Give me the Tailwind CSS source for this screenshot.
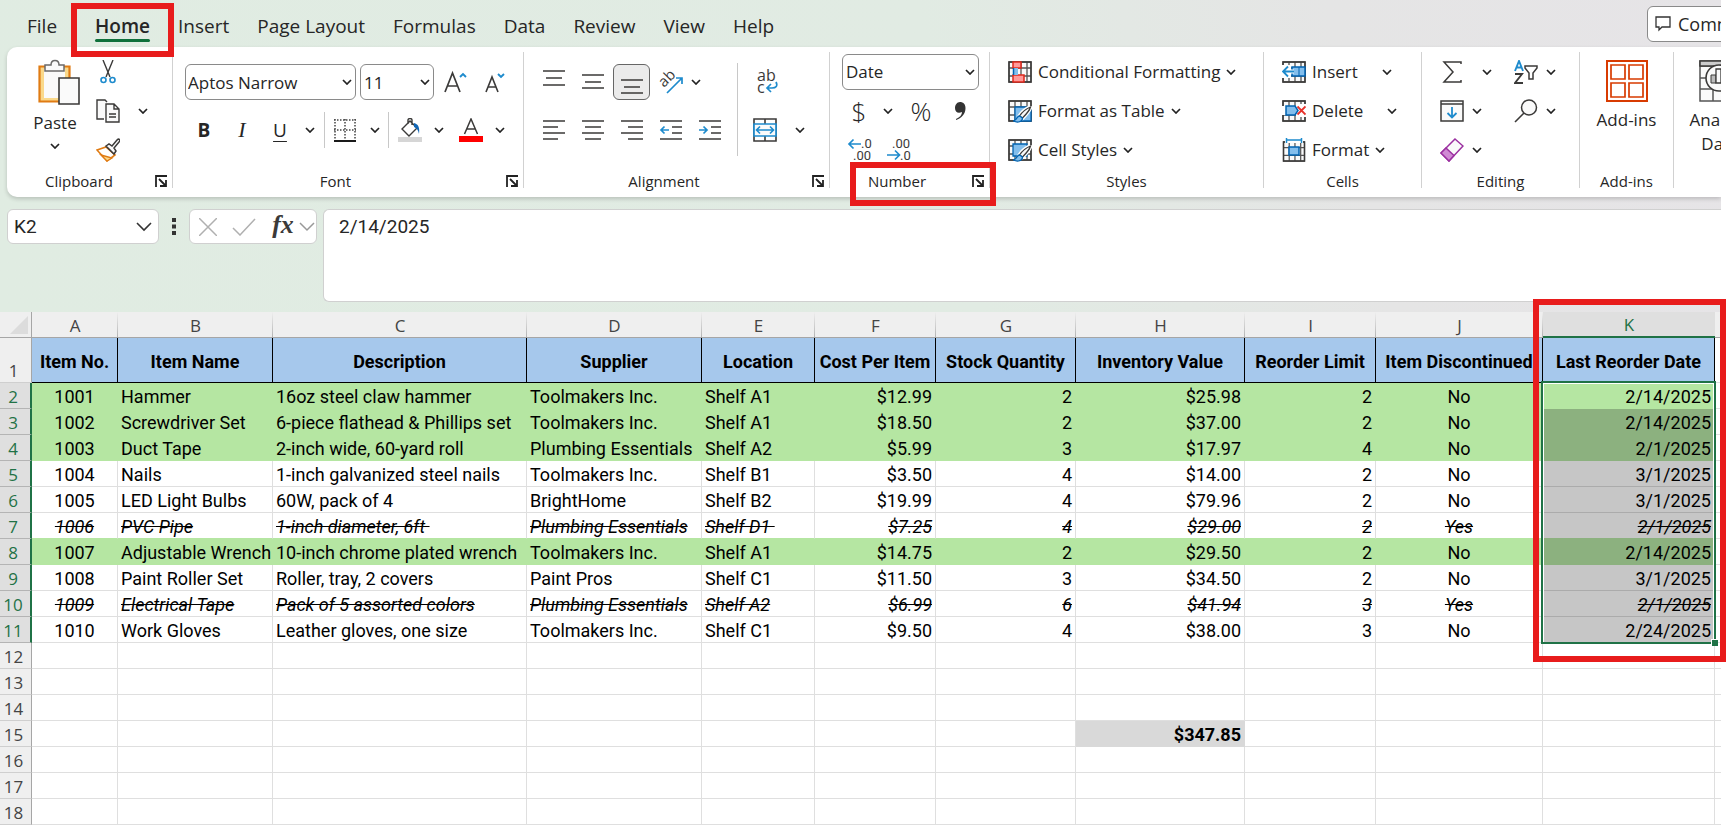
<!DOCTYPE html>
<html lang="en">
<head>
    <meta charset="UTF-8">
    <meta name="viewport" content="width=device-width, initial-scale=1.0">
    <title>Inventory - Excel</title>
    <script src="https://cdn.jsdelivr.net/npm/@tailwindcss/browser@4"></script>
</head>
<body class="bg-white pr-[6px] overflow-x-hidden font-['Open_Sans','Noto_Sans',sans-serif] text-[#262626]">
    <!-- Shared icons -->
    <svg class="hidden">
        <symbol id="chevron" viewBox="0 0 10 6"><path d="M1 1l4 4 4-4" fill="none" stroke="#222" stroke-width="1.7"/></symbol>
        <symbol id="launcher" viewBox="0 0 12 12"><path d="M1 12V1h11M4 4l6 6M11 5v6H5" fill="none" stroke="#222" stroke-width="1.8"/></symbol>
        <symbol id="grid" viewBox="0 0 24 22"><path d="M1 1h22v20H1zM1 7h22M1 15h22M7 1v20M13 1v20M19 1v20" fill="#fafafa" stroke="#555" stroke-width="1.3"/><path d="M1 1h22v20H1z" fill="none" stroke="#3b3a39" stroke-width="1.5"/></symbol>
        <symbol id="brush" viewBox="0 0 18 17"><path d="M17 1C12 3 8 7 6 10l3 2c3-3 7-7 8-11z" fill="#fff" stroke="#fff" stroke-width="4"/><path d="M17 1C12 3 8 7 6 10l3 2c3-3 7-7 8-11z" fill="#fafafa" stroke="#3b3a39" stroke-width="1.3"/><path d="M6 10c-3 0-2 4-6 5 4 2 9 1 9-3z" fill="#83beec" stroke="#0063b1" stroke-width="1.3"/></symbol>
    </svg>

    <div class="overflow-x-clip">
        <div class="bg-[linear-gradient(78deg,#e0ece2_0%,#e1ebe3_55%,#e5e5e5_78%,#e6e4e7_100%)] pb-[10px]">
            <!-- Tabs -->
            <div class="flex h-[47px] items-center">
                <nav class="flex gap-7 pl-[27px] pt-1 text-[19px] leading-6">
                    <button>File</button>
                    <button class="relative ml-[10px] font-semibold">Home
                        <span class="absolute inset-x-0 -bottom-1 h-[3px] rounded-full bg-[#0f703b]"></span>
                        <span class="pointer-events-none absolute -inset-x-6 -top-[11px] z-10 h-[54px] border-6 border-[#e81c1c]"></span>
                    </button>
                    <button>Insert</button>
                    <button>Page Layout</button>
                    <button>Formulas</button>
                    <button>Data</button>
                    <button>Review</button>
                    <button>View</button>
                    <button>Help</button>
                </nav>
                <div class="ml-auto w-[74px]">
                    <button class="flex h-9 w-[130px] items-center gap-[7px] rounded-md border border-[#8a8a8a] bg-white pl-[7px] text-[18px]">
                        <svg class="h-4 w-4" viewBox="0 0 16 16"><path d="M1 1h14v10H7l-3 3v-3H1z" fill="none" stroke="#333" stroke-width="1.3"/></svg>
                        <span class="pt-0.5">Comments</span>
                    </button>
                </div>
            </div>

            <!-- Ribbon -->
            <div class="ml-[7px] flex h-[150px] rounded-l-[10px] bg-white pt-[5px] shadow-[0_2px_4px_rgba(0,0,0,0.18)] text-[17px] leading-6">
                <section class="flex h-[136px] w-[166px] shrink-0 flex-col border-r border-[#d1d1d1]">
                    <div class="flex h-[117px]">
                        <button class="flex w-[88px] flex-col items-center pl-2 pt-[7px]">
                            <svg class="ml-2 h-[46px] w-[42px]" viewBox="0 0 42 46">
                                <path d="M1.500 7.500h30v35h-30z" fill="#fad98b" stroke="#e07b13" stroke-width="2.200"/><path d="M6 10h21v29H6z" fill="#fafafa"/>
                                <path d="M7 12V6h6c0-6 8-6 8 0h5v6z" fill="#fafafa" stroke="#6b6a69" stroke-width="1.500"/>
                                <path d="M21 19h20v26H21z" fill="#fafafa" stroke="#3b3a39" stroke-width="1.600"/>
                            </svg>
                            <span class="mt-1.5">Paste</span>
                            <svg class="mt-2 h-1.5 w-2.5"><use href="#chevron"/></svg>
                        </button>
                        <div class="grid w-[26px] grid-rows-3 justify-items-center">
                            <button aria-label="Cut"><svg class="h-6 w-4" viewBox="0 0 16 24"><path d="M3 0l7 17M13 0L6 17" fill="none" stroke="#3b3a39" stroke-width="1.400"/><circle cx="3.500" cy="20" r="2.500" fill="none" stroke="#1e8bcd" stroke-width="1.600"/><circle cx="12.500" cy="20" r="2.500" fill="none" stroke="#1e8bcd" stroke-width="1.600"/></svg></button>
                            <button aria-label="Copy"><svg class="h-6 w-6" viewBox="0 0 24 24"><path d="M8 20H1V1h8l2 2" fill="#fafafa" stroke="#3b3a39" stroke-width="1.400"/><path d="M10 5h8l5 5v13H10zM18 5v5h5M13 15h7M13 18h7" fill="#fafafa" stroke="#3b3a39" stroke-width="1.400"/></svg></button>
                            <button aria-label="Format Painter"><svg class="h-6 w-6" viewBox="0 0 24 24"><path d="M1 12l9-3 9 8-8 6z" fill="#fff" stroke="#e07b13" stroke-width="1.600"/><path d="M5 17l11 3-5 3z" fill="#fad98b" stroke="#e07b13" stroke-width="1.300"/><path d="M10 8l3-2 3 2 5-6c2-2 4 0 2 2l-5 6 2 3-2 3z" fill="#fafafa" stroke="#3b3a39" stroke-width="1.500"/></svg></button>
                        </div>
                        <button class="ml-3 flex w-5 items-center justify-center" aria-label="Copy options"><svg class="h-1.5 w-2.5"><use href="#chevron"/></svg></button>
                    </div>
                    <div class="mt-auto flex h-[14px] items-center pr-[5px] text-[15px] leading-[14px]"><span class="flex-1 text-center">Clipboard</span><button class="ml-1" aria-label="Clipboard settings"><svg class="h-3 w-3"><use href="#launcher"/></svg></button></div>
                </section>

                <section class="flex h-[136px] w-[351px] shrink-0 flex-col border-r border-[#d1d1d1]">
                    <div class="flex h-[117px] flex-col gap-3 pl-3 pt-3">
                        <div class="flex h-9 items-center">
                            <div class="flex h-9 w-[171px] items-center rounded-md border border-[#8a8a8a] pl-[2px] pr-[3px]">
                                <select aria-label="Font" class="min-w-0 flex-1 appearance-none pt-0.5 outline-none"><option>Aptos Narrow</option></select>
                                <svg class="h-1.5 w-2.5"><use href="#chevron"/></svg>
                            </div>
                            <div class="ml-1 flex h-9 w-[74px] items-center rounded-md border border-[#8a8a8a] pl-[3px] pr-[3px]">
                                <select aria-label="Font size" class="min-w-0 flex-1 appearance-none pt-0.5 outline-none"><option>11</option></select>
                                <svg class="h-1.5 w-2.5"><use href="#chevron"/></svg>
                            </div>
                            <button class="ml-2.5 w-6" aria-label="Increase font size"><svg class="h-6 w-6" viewBox="0 0 24 24"><path d="M1 22L8.500 3 16 22M3.500 16h10" fill="none" stroke="#3b3a39" stroke-width="1.700"/><path d="M16 7l3-3 3 3" fill="none" stroke="#1e8bcd" stroke-width="1.900"/></svg></button>
                            <button class="ml-4 w-6" aria-label="Decrease font size"><svg class="h-6 w-6" viewBox="0 0 24 24"><path d="M2 22L8 7l6 15M4 17h8" fill="none" stroke="#3b3a39" stroke-width="1.600"/><path d="M14 4l3 3 3-3" fill="none" stroke="#1e8bcd" stroke-width="1.900"/></svg></button>
                        </div>
                        <div class="flex h-9 items-center">
                            <button class="w-[38px] text-[19px] font-bold">B</button>
                            <button class="w-[38px] font-['Liberation_Serif',serif] text-[22px] italic">I</button>
                            <button class="w-[38px] text-[19px] underline underline-offset-4">U</button>
                            <button class="flex w-[22px] justify-center" aria-label="Underline options"><svg class="h-1.5 w-2.5"><use href="#chevron"/></svg></button>
                            <span class="ml-[3px] h-9 w-px bg-[#c8c8c8]"></span>
                            <button class="flex w-10 justify-center" aria-label="Borders"><svg class="h-6 w-6" viewBox="0 0 24 24"><path d="M1 2h22M1 12h22M2 1v20M12 1v20M22 1v20" fill="none" stroke="#444" stroke-width="1.500" stroke-dasharray="1.500 1.500"/><path d="M1 23h22" stroke="#000" stroke-width="1.800"/></svg></button>
                            <button class="flex w-5 justify-center" aria-label="Border options"><svg class="h-1.5 w-2.5"><use href="#chevron"/></svg></button>
                            <span class="ml-[3px] h-9 w-px bg-[#c8c8c8]"></span>
                            <button class="flex w-[42px] justify-center" aria-label="Fill colour"><svg class="h-6 w-6" viewBox="0 0 24 24"><path d="M4 11l8-8 7 7-8 8zM10 6V2c0-2 4-2 4 0v5" fill="none" stroke="#3b3a39" stroke-width="1.400"/><path d="M16 5c4 1 6 4 5 11-1-4-2-6-5-7z" fill="#1166b5"/><path d="M0 19h24v5H0z" fill="#d6d6d6"/></svg></button>
                            <button class="flex w-4 justify-center" aria-label="Fill options"><svg class="h-1.5 w-2.5"><use href="#chevron"/></svg></button>
                            <button class="flex w-12 justify-center" aria-label="Font colour"><svg class="h-6 w-6" viewBox="0 0 24 24"><path d="M5.500 16L12 1l6.500 15M8 11h8" fill="none" stroke="#3b3a39" stroke-width="1.500"/><path d="M0 18h24v6H0z" fill="#f00"/></svg></button>
                            <button aria-label="Font colour options"><svg class="h-1.5 w-2.5"><use href="#chevron"/></svg></button>
                        </div>
                    </div>
                    <div class="mt-auto flex h-[14px] items-center pr-[5px] text-[15px] leading-[14px]"><span class="flex-1 text-center">Font</span><button class="ml-2" aria-label="Font settings"><svg class="h-3 w-3"><use href="#launcher"/></svg></button></div>
                </section>

                <section class="flex h-[136px] w-[306px] shrink-0 flex-col border-r border-[#d1d1d1]">
                    <div class="flex h-[117px] pl-[10px]">
                        <div class="grid grid-cols-[repeat(5,39px)] grid-rows-[36px_36px] gap-y-3 pt-3 *:flex *:items-center *:justify-center">
                            <button aria-label="Top align"><svg class="h-6 w-6" viewBox="0 0 24 24"><path d="M1 1h22M4 8h16M1 15h22" fill="none" stroke="#3b3a39" stroke-width="1.600"/></svg></button>
                            <button aria-label="Middle align"><svg class="h-6 w-6" viewBox="0 0 24 24"><path d="M1 5h22M4 12h16M1 18h22" fill="none" stroke="#3b3a39" stroke-width="1.600"/></svg></button>
                            <button class="mx-[1px] rounded-md border border-[#666] bg-[#ebebeb]" aria-label="Bottom align"><svg class="h-6 w-6" viewBox="0 0 24 24"><path d="M1 10h22M4 17h16M1 23h22" fill="none" stroke="#3b3a39" stroke-width="1.600"/></svg></button>
                            <button aria-label="Orientation"><svg class="h-6 w-6 overflow-visible" viewBox="0 0 24 24"><text x="5" y="18" transform="rotate(-45 5 18)" font-size="15" font-family="Open Sans, sans-serif" fill="#3b3a39">ab</text><path d="M8 23L23 8M17 8h6v6" fill="none" stroke="#1e8bcd" stroke-width="1.700"/></svg></button>
                            <button class="w-3" aria-label="Orientation options"><svg class="h-1.5 w-2.5"><use href="#chevron"/></svg></button>
                            <button aria-label="Align left"><svg class="h-6 w-6" viewBox="0 0 24 24"><path d="M1 3h22M1 9h15M1 15h22M1 21h15" fill="none" stroke="#3b3a39" stroke-width="1.600"/></svg></button>
                            <button aria-label="Center"><svg class="h-6 w-6" viewBox="0 0 24 24"><path d="M1 3h22M4 9h16M1 15h22M4 21h16" fill="none" stroke="#3b3a39" stroke-width="1.600"/></svg></button>
                            <button aria-label="Align right"><svg class="h-6 w-6" viewBox="0 0 24 24"><path d="M1 3h22M8 9h15M1 15h22M8 21h15" fill="none" stroke="#3b3a39" stroke-width="1.600"/></svg></button>
                            <button aria-label="Decrease indent"><svg class="h-6 w-6" viewBox="0 0 24 24"><path d="M1 3h22M13 9h10M13 15h10M1 21h22" fill="none" stroke="#3b3a39" stroke-width="1.600"/><path d="M10 12H2M5.500 8.500L2 12l3.500 3.500" fill="none" stroke="#1e8bcd" stroke-width="1.700"/></svg></button>
                            <button aria-label="Increase indent"><svg class="h-6 w-6" viewBox="0 0 24 24"><path d="M1 3h22M13 9h10M13 15h10M1 21h22" fill="none" stroke="#3b3a39" stroke-width="1.600"/><path d="M1 12h8M5.500 8.500L9 12l-3.500 3.500" fill="none" stroke="#1e8bcd" stroke-width="1.700"/></svg></button>
                        </div>
                        <span class="ml-2 mt-[11px] h-[93px] w-px bg-[#c8c8c8]"></span>
                        <div class="grid grid-cols-[54px_16px] grid-rows-[36px_36px] gap-y-3 pt-3 *:flex *:items-center *:justify-center">
                            <button class="pl-1" aria-label="Wrap text"><svg class="h-6 w-6 overflow-visible" viewBox="0 0 24 24"><text x="2" y="11" font-size="16" font-family="Open Sans, sans-serif" fill="#3b3a39">ab</text><text x="2" y="23" font-size="16" font-family="Open Sans, sans-serif" fill="#3b3a39">c</text><path d="M21 12c2 4 0 6-4 6h-5M16 14l-4 4 4 4" fill="none" stroke="#1e8bcd" stroke-width="1.700"/></svg></button>
                            <span></span>
                            <button aria-label="Merge and center"><svg class="h-6 w-6" viewBox="0 0 24 24"><path d="M1 1h22v22H1zM12 1v22" fill="none" stroke="#3b3a39" stroke-width="1.600"/><path d="M1 6h22v12H1z" fill="#fafafa" stroke="#1e8bcd" stroke-width="1.700"/><path d="M4 12h16M7 8.500L3.500 12 7 15.500M17 8.500l3.500 3.500-3.500 3.500" fill="none" stroke="#1e8bcd" stroke-width="1.600"/></svg></button>
                            <button aria-label="Merge options"><svg class="h-1.5 w-2.5"><use href="#chevron"/></svg></button>
                        </div>
                    </div>
                    <div class="mt-auto flex h-[14px] items-center pr-[5px] text-[15px] leading-[14px]"><span class="flex-1 text-center">Alignment</span><button class="ml-2" aria-label="Alignment settings"><svg class="h-3 w-3"><use href="#launcher"/></svg></button></div>
                </section>

                <section class="flex h-[136px] w-[160px] shrink-0 flex-col border-r border-[#d1d1d1]">
                    <div class="grid h-[117px] grid-rows-[39px_39px_39px] items-center pl-3">
                        <div class="flex h-9 w-[137px] items-center rounded-md border border-[#8a8a8a] pl-[3px] pr-[3px]">
                            <select aria-label="Number format" class="min-w-0 flex-1 appearance-none outline-none"><option>Date</option></select>
                            <svg class="h-1.5 w-2.5"><use href="#chevron"/></svg>
                        </div>
                        <div class="flex items-center text-[26px] leading-8">
                            <button class="w-[34px] font-light">$</button>
                            <button class="flex w-6 justify-center" aria-label="Currency options"><svg class="h-1.5 w-2.5"><use href="#chevron"/></svg></button>
                            <button class="w-[42px] font-light">%</button>
                            <button class="flex w-9 justify-center" aria-label="Comma style"><svg class="h-5 w-3" viewBox="0 0 12 20"><path d="M6 1c3 0 5.500 2 5.500 6 0 6-4 10-9.500 12v-1c4-2 6-4 6-7-4 2-7 0-7-4 0-3 2-6 5-6z" fill="#333"/></svg></button>
                        </div>
                        <div class="flex items-center">
                            <button class="flex w-9 justify-center" aria-label="Increase decimal"><svg class="h-6 w-6 overflow-visible" viewBox="0 0 24 24"><text x="13" y="10" font-size="13" font-family="Roboto, sans-serif" fill="#3b3a39">.0</text><text x="5" y="22" font-size="13" font-family="Roboto, sans-serif" fill="#3b3a39">.00</text><path d="M13 6H1M5.500 1.500L1 6l4.500 4.500" fill="none" stroke="#1e8bcd" stroke-width="1.700"/></svg></button>
                            <button class="flex w-[42px] justify-center" aria-label="Decrease decimal"><svg class="h-6 w-6 overflow-visible" viewBox="0 0 24 24"><text x="5" y="10" font-size="13" font-family="Roboto, sans-serif" fill="#3b3a39">.00</text><text x="13" y="22" font-size="13" font-family="Roboto, sans-serif" fill="#3b3a39">.0</text><path d="M0 17h12M8 12.500l4.500 4.500L8 21.500" fill="none" stroke="#1e8bcd" stroke-width="1.700"/></svg></button>
                        </div>
                    </div>
                    <div class="relative mt-auto flex h-[14px] items-center pr-[5px] text-[15px] leading-[14px]"><span class="flex-1 text-center">Number</span><button class="ml-2" aria-label="Number settings"><svg class="h-3 w-3"><use href="#launcher"/></svg></button>
                        <span class="pointer-events-none absolute -right-[7px] -top-3 left-5 z-10 h-11 border-6 border-[#e81c1c]"></span>
                    </div>
                </section>

                <section class="flex h-[136px] w-[274px] shrink-0 flex-col border-r border-[#d1d1d1]">
                    <div class="grid h-[117px] grid-rows-3 justify-items-start pl-[18px]">
                        <button class="flex items-center gap-1.5">
                            <svg class="h-6 w-6" viewBox="0 0 24 24"><use href="#grid" x="0" y="1" width="24" height="22"/><path d="M5 2h8v6H5zM5 15h11v7H5z" fill="#ff9a9a" stroke="#e0281c" stroke-width="1.500"/><path d="M5 8h5v7H5z" fill="#83beec"/><path d="M5.500 8v7" stroke="#0063b1" stroke-width="1.500"/></svg>
                            Conditional Formatting <svg class="h-1.5 w-2.5"><use href="#chevron"/></svg></button>
                        <button class="flex items-center gap-1.5">
                            <svg class="h-6 w-6" viewBox="0 0 24 24"><use href="#grid" x="0" y="1" width="24" height="22"/><path d="M7 8h16v14H7z" fill="#83beec" stroke="#0063b1" stroke-width="1.300"/><use href="#brush" x="5" y="7" width="19" height="17"/></svg>
                            Format as Table <svg class="h-1.5 w-2.5"><use href="#chevron"/></svg></button>
                        <button class="flex items-center gap-1.5">
                            <svg class="h-6 w-6" viewBox="0 0 24 24"><use href="#grid" x="0" y="1" width="24" height="22"/><path d="M5 6h14v12H5z" fill="#83beec" stroke="#0063b1" stroke-width="1.300"/><use href="#brush" x="5" y="7" width="19" height="17"/></svg>
                            Cell Styles <svg class="h-1.5 w-2.5"><use href="#chevron"/></svg></button>
                    </div>
                    <div class="mt-auto h-[14px] text-center text-[15px] leading-[14px]">Styles</div>
                </section>

                <section class="flex h-[136px] w-[158px] shrink-0 flex-col border-r border-[#d1d1d1]">
                    <div class="grid h-[117px] grid-rows-3 justify-items-start pl-[18px]">
                        <button class="flex items-center gap-1.5">
                            <svg class="h-6 w-6" viewBox="0 0 24 24"><use href="#grid" x="0" y="1" width="24" height="22"/><path d="M10 7h13v9H10z" fill="#83beec" stroke="#0063b1" stroke-width="1.500"/><path d="M17 7v9" stroke="#0063b1"/><path d="M0 5h9v13H0z" fill="#fff"/><path d="M12 11.500H1M6 6.500l-5 5 5 5" fill="none" stroke="#fff" stroke-width="4"/><path d="M12 11.500H1M6 6.500l-5 5 5 5" fill="none" stroke="#1e8bcd" stroke-width="1.800"/></svg>
                            Insert <svg class="ml-[18px] h-1.5 w-2.5"><use href="#chevron"/></svg></button>
                        <button class="flex items-center gap-1.5">
                            <svg class="h-6 w-6" viewBox="0 0 24 24"><use href="#grid" x="0" y="1" width="24" height="22"/><path d="M0 7h4v9H0zM14 5h10v13H14z" fill="#fff"/><path d="M4 7h9l3 4.500-3 4.500H4z" fill="#83beec" stroke="#0063b1" stroke-width="1.500"/><path d="M15.500 7.500l8 8M23.500 7.500l-8 8" stroke="#e8312a" stroke-width="1.800"/></svg>
                            Delete <svg class="ml-[18px] h-1.5 w-2.5"><use href="#chevron"/></svg></button>
                        <button class="flex items-center gap-1.5">
                            <svg class="h-6 w-6" viewBox="0 0 24 24"><use href="#grid" x="0" y="3" width="24" height="21"/><path d="M3 0h18v5H3z" fill="#fff"/><path d="M5 2h14M4.500 0v5M19.500 0v5" stroke="#1e8bcd" stroke-width="1.500"/><path d="M7 9h10v8H7z" fill="#83beec" stroke="#0063b1" stroke-width="1.500"/></svg>
                            Format <svg class="h-1.5 w-2.5"><use href="#chevron"/></svg></button>
                    </div>
                    <div class="mt-auto h-[14px] text-center text-[15px] leading-[14px]">Cells</div>
                </section>

                <section class="flex h-[136px] w-[158px] shrink-0 flex-col border-r border-[#d1d1d1]">
                    <div class="grid h-[117px] grid-cols-[74px_1fr] grid-rows-3 pl-3 *:flex *:items-center">
                        <button aria-label="AutoSum"><svg class="mx-1.5 h-6 w-6" viewBox="0 0 24 24"><path d="M21 4V2H4l9 10-9 10h17v-2" fill="none" stroke="#3b3a39" stroke-width="1.500"/></svg><svg class="ml-3 h-1.5 w-2.5"><use href="#chevron"/></svg></button>
                        <button aria-label="Sort and filter"><svg class="mx-1.5 h-6 w-6" viewBox="0 0 24 24"><path d="M1 11l4-10 4 10M2.500 7.500h5" fill="none" stroke="#1e8bcd" stroke-width="1.900"/><path d="M1 14h7l-7 9h8" fill="none" stroke="#3b3a39" stroke-width="1.900"/><path d="M11 6h12v2l-4 5v6h-4v-6l-4-5z" fill="none" stroke="#3b3a39" stroke-width="1.500"/></svg><svg class="ml-0.5 h-1.5 w-2.5"><use href="#chevron"/></svg></button>
                        <button aria-label="Fill"><svg class="mx-1.5 h-6 w-6" viewBox="0 0 24 24"><path d="M1 2h22v20H1zM1 5h22" fill="#fafafa" stroke="#3b3a39" stroke-width="1.500"/><path d="M12 8v10M7.500 14l4.500 4.500 4.500-4.500" fill="none" stroke="#1e8bcd" stroke-width="1.800"/></svg><svg class="ml-0.5 h-1.5 w-2.5"><use href="#chevron"/></svg></button>
                        <button aria-label="Find and select"><svg class="mx-1.5 h-6 w-6" viewBox="0 0 24 24"><circle cx="15" cy="8.500" r="7.500" fill="#fafafa" stroke="#3b3a39" stroke-width="1.500"/><path d="M10 14l-9 9" stroke="#3b3a39" stroke-width="1.600"/></svg><svg class="ml-0.5 h-1.5 w-2.5"><use href="#chevron"/></svg></button>
                        <button aria-label="Clear"><svg class="mx-1.5 h-6 w-6" viewBox="0 0 24 24"><path d="M15 1l8 7L9 23l-8-8z" fill="#fafafa" stroke="#9b30a0" stroke-width="1.500"/><path d="M6 10l8 7.500L9 23l-8-8z" fill="#d08ad4" stroke="#9b30a0" stroke-width="1.500"/></svg><svg class="ml-0.5 h-1.5 w-2.5"><use href="#chevron"/></svg></button>
                    </div>
                    <div class="mt-auto h-[14px] text-center text-[15px] leading-[14px]">Editing</div>
                </section>

                <section class="flex h-[136px] w-[94px] shrink-0 flex-col border-r border-[#d1d1d1]">
                    <button class="flex flex-col items-center pt-2">
                        <svg class="h-[42px] w-[42px]" viewBox="0 0 42 42"><path d="M1 1h40v40H1z" fill="#fff" stroke="#d83b01" stroke-width="2"/><path d="M5 5h14v14H5zM23 5h14v14H23zM5 23h14v14H5zM23 23h14v14H23z" fill="#fff" stroke="#d83b01" stroke-width="1.700"/></svg>
                        <span class="mt-1.5">Add-ins</span>
                    </button>
                    <div class="mt-auto h-[14px] text-center text-[15px] leading-[14px]">Add-ins</div>
                </section>

                <section class="w-[47px] overflow-hidden">
                    <button class="flex w-[92px] flex-col items-center pt-2">
                        <svg class="h-[42px] w-[42px]" viewBox="0 0 42 42"><path d="M1 1h40v40H1zM1 6h40M1 18h40M1 29h40M14 6v35M28 6v35" fill="#fafafa" stroke="#555" stroke-width="1.500"/><path d="M1 1h40v5H1z" fill="#ccc" stroke="#3b3a39" stroke-width="1.500"/><circle cx="20" cy="18" r="13" fill="#fafafa" stroke="#3b3a39" stroke-width="1.600"/><path d="M12 15h5v8h-5z" fill="#bbb" stroke="#3b3a39"/><path d="M17 9h5v14h-5zM22 13h5v10h-5z" fill="#fafafa" stroke="#3b3a39" stroke-width="1.300"/></svg>
                        <span class="mt-1.5">Analyze<br>Data</span>
                    </button>
                </section>
            </div>

            <!-- Formula bar -->
            <div class="mt-3 flex items-start pl-[7px] font-[Roboto,sans-serif] text-[19px]">
                <div class="flex h-[35px] w-[152px] items-center rounded-md border border-[#d0d0d0] bg-white px-[6px]">
                    <input aria-label="Name box" class="min-w-0 flex-1 pt-0.5 text-[19px] outline-none" value="K2">
                    <svg class="h-2.5 w-4" viewBox="0 0 16 10"><path d="M1 1l7 7 7-7" fill="none" stroke="#333" stroke-width="1.600"/></svg>
                </div>
                <svg class="mx-[13px] mt-[9px] h-[17px] w-1" viewBox="0 0 4 17"><path d="M0 0h4v4H0zM0 6.500h4v4H0zM0 13h4v4H0z" fill="#333"/></svg>
                <div class="flex h-[35px] w-[128px] items-center rounded-md border border-[#d0d0d0] bg-white pl-[9px]">
                    <button aria-label="Cancel"><svg class="h-[18px] w-[18px]" viewBox="0 0 18 18"><path d="M0 0l18 18M18 0L0 18" stroke="#b0b0b0" stroke-width="1.500"/></svg></button>
                    <button class="ml-[15px]" aria-label="Enter"><svg class="h-[18px] w-6" viewBox="0 0 24 18"><path d="M1 10l7 7L23 1" fill="none" stroke="#b0b0b0" stroke-width="1.500"/></svg></button>
                    <button class="ml-[15px] w-6 pb-1 font-['Liberation_Serif',serif] text-[26px] leading-6 font-bold italic text-[#3b3a39]">fx</button>
                    <button class="ml-1" aria-label="Function options"><svg class="h-2.5 w-4" viewBox="0 0 16 10"><path d="M1 1l7 7 7-7" fill="none" stroke="#999" stroke-width="1.500"/></svg></button>
                </div>
                <textarea aria-label="Formula" class="ml-1.5 h-[93px] flex-1 resize-none rounded-l-md border border-r-0 border-[#d0d0d0] bg-white px-[15px] py-[5px] leading-6 outline-none">2/14/2025</textarea>
            </div>
        </div>
    </div>

    <!-- Worksheet -->
    <div class="relative">
        <table class="w-full table-fixed border-separate border-spacing-0 font-[Roboto,sans-serif] text-[18px] leading-[23px] text-black whitespace-pre">
            <colgroup>
                <col class="w-[32px]"><col class="w-[86px]"><col class="w-[155px]"><col class="w-[254px]"><col class="w-[175px]"><col class="w-[113px]"><col class="w-[121px]"><col class="w-[140px]"><col class="w-[169px]"><col class="w-[131px]"><col class="w-[167px]"><col class="w-[172px]"><col>
            </colgroup>
            <thead><tr id="letters" class="h-[26px]"></tr></thead>
            <tbody id="rows"></tbody>
        </table>
        <!-- Selection K2:K11 -->
        <div class="pointer-events-none absolute left-[1541px] top-[69px] h-[263px] w-[175px] border-2 border-[#1f7246]">
            <div class="h-full border border-white border-b-0"></div>
            <span class="absolute -bottom-1 -right-1 h-[7px] w-[7px] border-l border-t border-white bg-[#1f7246]"></span>
        </div>
        <div class="pointer-events-none absolute -top-[13px] left-[1533px] h-[363px] w-[193px] border-6 border-[#e81c1c]"></div>
    </div>

    <script>
        const letters = ['A', 'B', 'C', 'D', 'E', 'F', 'G', 'H', 'I', 'J', 'K'];
        const titles = ['Item No.', 'Item Name', 'Description', 'Supplier', 'Location', 'Cost Per Item', 'Stock Quantity', 'Inventory Value', 'Reorder Limit', 'Item Discontinued', 'Last Reorder Date'];
        const items = [
            ['1001', 'Hammer', '16oz steel claw hammer', 'Toolmakers Inc.', 'Shelf A1', '$12.99', '2', '$25.98', '2', 'No', '2/14/2025'],
            ['1002', 'Screwdriver Set', '6-piece flathead & Phillips set', 'Toolmakers Inc.', 'Shelf A1', '$18.50', '2', '$37.00', '2', 'No', '2/14/2025'],
            ['1003', 'Duct Tape', '2-inch wide, 60-yard roll', 'Plumbing Essentials', 'Shelf A2', '$5.99', '3', '$17.97', '4', 'No', '2/1/2025'],
            ['1004', 'Nails', '1-inch galvanized steel nails', 'Toolmakers Inc.', 'Shelf B1', '$3.50', '4', '$14.00', '2', 'No', '3/1/2025'],
            ['1005', 'LED Light Bulbs', '60W, pack of 4', 'BrightHome', 'Shelf B2', '$19.99', '4', '$79.96', '2', 'No', '3/1/2025'],
            ['1006', 'PVC Pipe', '1-inch diameter, 6ft ', 'Plumbing Essentials', 'Shelf D1 ', '$7.25', '4', '$29.00', '2', 'Yes', '2/1/2025'],
            ['1007', 'Adjustable Wrench', '10-inch chrome plated wrench', 'Toolmakers Inc.', 'Shelf A1', '$14.75', '2', '$29.50', '2', 'No', '2/14/2025'],
            ['1008', 'Paint Roller Set', 'Roller, tray, 2 covers', 'Paint Pros', 'Shelf C1', '$11.50', '3', '$34.50', '2', 'No', '3/1/2025'],
            ['1009', 'Electrical Tape', 'Pack of 5 assorted colors', 'Plumbing Essentials', 'Shelf A2', '$6.99', '6', '$41.94', '3', 'Yes', '2/1/2025'],
            ['1010', 'Work Gloves', 'Leather gloves, one size', 'Toolmakers Inc.', 'Shelf C1', '$9.50', '4', '$38.00', '3', 'No', '2/24/2025']
        ];
        const aligns = ['text-center', 'text-left', 'text-left', 'text-left', 'text-left', 'text-right', 'text-right', 'text-right', 'text-right', 'text-center', 'text-right'];
        const green = [2, 3, 4, 8];

        function cell(parent, tag, text, className) {
            const el = document.createElement(tag);
            el.textContent = text;
            el.className = className;
            parent.appendChild(el);
            return el;
        }

        // Column letters
        const head = document.getElementById('letters');
        const corner = cell(head, 'td', '', 'bg-[#efefef] border-b border-r border-[#a6a6a6] p-0');
        corner.innerHTML = '<svg class="ml-[10px] h-[18px] w-[18px]" viewBox="0 0 18 18"><path d="M18 0v18H0z" fill="#dcdcdc"/></svg>';
        letters.forEach(letter => {
            cell(head, 'th', letter, "p-0 pt-[2px] font-['Open_Sans',sans-serif] font-normal text-[17px] " + (letter === 'K'
                ? 'bg-[#dfdfdf] text-[#1f7246] leading-[22px] border-b-2 border-[#1f7246]'
                : 'bg-[#efefef] text-[#444] leading-[23px] border-b border-[#a6a6a6] bg-linear-to-b from-[#efefef] to-[#b4b4b4] bg-[length:1px_100%] bg-right bg-no-repeat'));
        });
        cell(head, 'th', '', 'bg-[#efefef] border-b border-[#a6a6a6]');

        // Rows 1 to 18
        const body = document.getElementById('rows');
        for (let n = 1; n <= 18; n++) {
            const tr = document.createElement('tr');
            tr.className = n === 1 ? 'h-[45px]' : 'h-[26px]';
            const selected = n >= 2 && n <= 11;
            cell(tr, 'th', n, "p-0 pt-[2px] pr-1 font-['Open_Sans',sans-serif] font-normal text-[17px] align-bottom " + (selected
                ? 'bg-[#dfdfdf] text-[#1f7246] border-b border-b-[#b4b4b4] border-r-2 border-r-[#1f7246]'
                : 'bg-[#efefef] text-[#444] border-b border-b-[#cfcfcf] border-r border-r-[#a6a6a6]'));

            letters.forEach((letter, i) => {
                if (n === 1) {
                    cell(tr, 'th', titles[i], 'bg-[#a6c8ec] border-r border-b border-black p-0 pt-[2px] font-bold align-middle');
                    return;
                }
                const item = items[n - 2];
                const isGreen = green.includes(n);
                const inK = letter === 'K' && selected && n > 2;
                let cls = 'border-r border-b px-[3px] pt-[2px] pb-0 ' + aligns[i];
                if (isGreen) {
                    cls += inK ? ' bg-[#8cb17f] border-[#8cb17f]' : ' bg-[#b5e6a2] border-[#b5e6a2]';
                } else if (inK) {
                    cls += ' bg-[#c6c6c6] border-r-[#c6c6c6] ' + (n === 7 ? 'border-b-[#8cb17f]' : 'border-b-[#ababab]');
                } else if (n === 15 && letter === 'H') {
                    cls += ' bg-[#d9d9d9] border-[#d9d9d9] font-bold';
                } else {
                    cls += ' border-r-[#dfdfdf] ' + (n === 7 ? 'border-b-[#b5e6a2]' : 'border-b-[#dfdfdf]');
                }
                if (n === 7 || n === 10) {
                    cls += ' italic line-through';
                }
                cell(tr, 'td', item ? item[i] : (n === 15 && letter === 'H' ? '$347.85' : ''), cls);
            });
            cell(tr, 'td', '', 'border-b border-[#dfdfdf]');
            body.appendChild(tr);
        }
    </script>
</body>
</html>
